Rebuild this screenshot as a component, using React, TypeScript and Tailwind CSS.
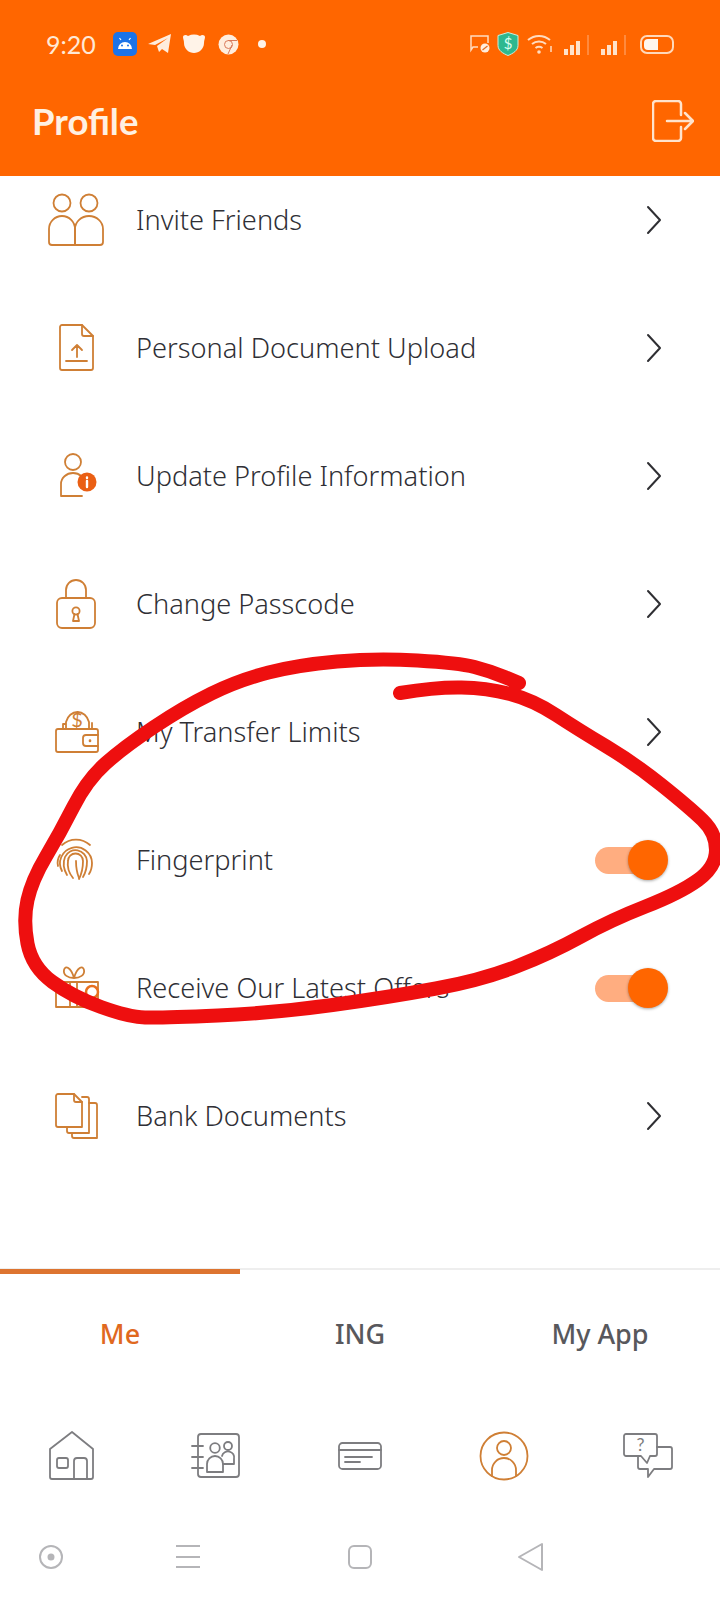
import React from 'react';

const ICON = '#cf7f35';
const GREY = '#7d7d80';

// 60x60 line icon, drawn on the same grid everywhere
const Line: React.FC<{ color?: string; width?: number; children: React.ReactNode }> = ({ color = ICON, width = 1.8, children }) => (
  <svg width="60" height="60" viewBox="0 0 60 60" fill="none" stroke={color} strokeWidth={width} strokeLinecap="round" strokeLinejoin="round">
    {children}
  </svg>
);

const InviteIcon = () => (
  <Line>
    <circle cx="16" cy="13" r="8.5" />
    <circle cx="43" cy="13" r="8.5" />
    <path d="M6 55h23V39a13 13 0 0 0-26 0v13a3 3 0 0 0 3 3z" />
    <path d="M29 55h25a3 3 0 0 0 3-3V39a14 13 0 0 0-28 0z" />
  </Line>
);

const UploadIcon = () => (
  <Line>
    <path d="M16 7h20l11 11v32a2 2 0 0 1-2 2H16a2 2 0 0 1-2-2V9a2 2 0 0 1 2-2z" />
    <path d="M36 7v9a2 2 0 0 0 2 2h9" />
    <path d="M31 39V27M26 32l5-5 5 5M20 43h21" />
  </Line>
);

const ProfileInfoIcon = () => (
  <Line>
    <circle cx="27" cy="16" r="8" />
    <path d="M15 50V38a12 11 0 0 1 24 0M15 50h21" />
    <circle cx="41" cy="36" r="9.5" fill="#ea5f14" stroke="none" />
    <path d="M41 35v6M41 31.5v.5" stroke="#fff" strokeWidth="2.4" />
  </Line>
);

const LockIcon = () => (
  <Line>
    <rect x="11" y="24" width="38" height="30" rx="5" />
    <path d="M20 24v-8a10 10 0 0 1 20 0v8" />
    <circle cx="30" cy="37" r="3.6" />
    <path d="M28.5 40L27 47h6l-1.500-7" />
  </Line>
);

const WalletIcon = () => (
  <Line>
    <path d="M10 34v14a2 2 0 0 0 2 2h38a2 2 0 0 0 2-2V29a2 2 0 0 0-2-2H12a2 2 0 0 0-2 2v5" />
    <path d="M52 33H40a3 3 0 0 0-3 3v5a3 3 0 0 0 3 3h12" />
    <path d="M44 38.500v.5" strokeWidth="2.600" />
    <path d="M17 27v-5h2M46 27v-6M20 26v-6a12 14 0 0 1 23 0v6" />
    <text x="31" y="25" textAnchor="middle" fontSize="20" fontFamily="Lato, sans-serif" fill={ICON} stroke="none">$</text>
  </Line>
);

const FingerprintIcon = () => (
  <Line>
    <path d="M16 15a21 21 0 0 1 28 0" />
    <path d="M12 36c-1-4 0-8 2-11" />
    <path d="M16 41A16 16 0 1 1 46 33c0 5-1 8-3 11" />
    <path d="M21 45C17 38 17 32 19 27a11.500 11.500 0 0 1 22 4c0 6-1 11-4 16" />
    <path d="M27 48c-4-5-6-11-5-17a7.500 7.500 0 0 1 15 0c0 6-1 12-4 18" />
    <path d="M30 31c0 6 1 12 3 17" />
  </Line>
);

const GiftIcon = () => (
  <Line>
    <path d="M10 24h42v25H10zM24 24v25M31 24v25" />
    <path d="M28 20c-6 0-11-3-10-8s7-3 10 8zM28 20c6 0 11-3 10-8s-7-3-10 8z" />
    <circle cx="46" cy="34" r="6" stroke="#e8701f" strokeWidth="2.500" />
  </Line>
);

const DocsIcon = () => (
  <Line>
    <path d="M12 8h16l8 8v25H12a2 2 0 0 1-2-2V10a2 2 0 0 1 2-2z" />
    <path d="M28 8v6a2 2 0 0 0 2 2h6" />
    <path d="M36 11h5a2 2 0 0 1 2 2v34H23a2 2 0 0 1-2-2v-4" />
    <path d="M43 17h6a2 2 0 0 1 2 2v33H28a2 2 0 0 1-2-2v-3" />
  </Line>
);

const HomeIcon = () => (
  <Line color={GREY}>
    <path d="M30 6L8 23v28a2 2 0 0 0 2 2h39a2 2 0 0 0 2-2V23z" />
    <rect x="15" y="32" width="11" height="10" rx="2" />
    <path d="M32 53V35a3 3 0 0 1 3-3h7a3 3 0 0 1 3 3v18" />
  </Line>
);

const ContactsIcon = () => (
  <Line color={GREY}>
    <rect x="12" y="8" width="41" height="43" rx="3" />
    <path d="M6 20h11M6 31h11M6 42h11" />
    <circle cx="29" cy="22" r="4.800" />
    <circle cx="42" cy="20" r="4" />
    <path d="M21 46V38a8 8 0 0 1 16 0v8z" />
    <path d="M36 30a5.500 5.500 0 0 1 12 3v5H37" />
  </Line>
);

const CardIcon = () => (
  <Line color={GREY}>
    <rect x="9" y="17" width="42" height="26" rx="3.500" />
    <path d="M9 24h42M15 31h27M15 36h15" />
  </Line>
);

const ProfileTabIcon = () => (
  <Line>
    <circle cx="30" cy="30" r="23.500" />
    <circle cx="30" cy="22" r="7" />
    <path d="M18 50V44a12 12 0 0 1 24 0v6" />
  </Line>
);

const HelpIcon = () => (
  <Line color={GREY}>
    <path d="M8 8h29a2 2 0 0 1 2 2v18a2 2 0 0 1-2 2h-5l-3 7-6-7H8a2 2 0 0 1-2-2V10a2 2 0 0 1 2-2z" />
    <path d="M39 21h13a2 2 0 0 1 2 2v18a2 2 0 0 1-2 2H36l-6 8v-8h-8a2 2 0 0 1-2-2v-11" />
    <text x="22.500" y="25" textAnchor="middle" fontSize="18" fontFamily="Lato, sans-serif" fill={GREY} stroke="none">?</text>
  </Line>
);

const Chevron = () => (
  <svg width="16" height="30" viewBox="0 0 16 30" fill="none" stroke="#2f2f33" strokeWidth="2" strokeLinecap="round" strokeLinejoin="round">
    <path d="M2 2l12 13L2 28" />
  </svg>
);

const Toggle = () => (
  <div className="relative w-[73px] h-[40px] flex items-center">
    <div className="w-[56px] h-[27px] rounded-full bg-[#ffad80]" />
    <div className="absolute right-0 top-0 w-[40px] h-[40px] rounded-full bg-[#ff6600] shadow-[0_1px_3px_rgba(0,0,0,0.35)]" />
  </div>
);

const rows = [
  { label: 'Invite Friends', icon: <InviteIcon /> },
  { label: 'Personal Document Upload', icon: <UploadIcon /> },
  { label: 'Update Profile Information', icon: <ProfileInfoIcon /> },
  { label: 'Change Passcode', icon: <LockIcon /> },
  { label: 'My Transfer Limits', icon: <WalletIcon /> },
  { label: 'Fingerprint', icon: <FingerprintIcon />, toggle: true },
  { label: 'Receive Our Latest Offers', icon: <GiftIcon />, toggle: true },
  { label: 'Bank Documents', icon: <DocsIcon /> },
];

const StatusLeft = () => (
  <div className="flex items-center">
    <span className="text-[25px] leading-none text-[#ffe9d6] font-['Lato',sans-serif] w-[67px]">9:20</span>
    <svg width="24" height="24" viewBox="0 0 24 24">
      <rect width="24" height="24" rx="5" fill="#1b73e8" />
      <path d="M5 17a7 7 0 0 1 14 0z" fill="#fff" />
      <path d="M8 8L6.500 6M16 8l1.500-2" stroke="#fff" strokeWidth="1.200" />
      <circle cx="9" cy="13.500" r="1" fill="#1b73e8" />
      <circle cx="15" cy="13.500" r="1" fill="#1b73e8" />
    </svg>
    <svg className="ml-[11px]" width="24" height="22" viewBox="0 0 24 22">
      <path d="M0 11L23 1l-3 19-6-4-3 3-2-6 11-8-13 7z" fill="#ffeddd" />
    </svg>
    <svg className="ml-[10px]" width="24" height="20" viewBox="0 0 24 20">
      <path d="M1 3c0-2 3-3 5-1a14 14 0 0 1 12 0c2-2 5-1 5 1 0 2-1 3-1 6 0 6-5 10-10 10S2 15 2 9c0-3-1-4-1-6z" fill="#fff3e8" />
    </svg>
    <svg className="ml-[12px]" width="21" height="21" viewBox="0 0 21 21" fill="none">
      <circle cx="10.500" cy="10.500" r="10" fill="#ffeddd" />
      <circle cx="10.500" cy="10.500" r="4" stroke="#d9795a" strokeWidth="1" />
      <path d="M10 6.500h9M14 11l-4 9" stroke="#d9795a" strokeWidth="1" />
    </svg>
    <div className="ml-[19px] w-[8px] h-[8px] rounded-full bg-[#fff3e8]" />
  </div>
);

const StatusRight = () => (
  <div className="flex items-center">
    <svg width="20" height="20" viewBox="0 0 20 20" fill="none">
      <path d="M8 13H3l-2 3V2h17v7" stroke="#ffdcc0" strokeWidth="1.500" />
      <circle cx="15" cy="14" r="4.500" fill="#ffeddd" />
      <path d="M12.500 16l5-4" stroke="#e06a20" strokeWidth="1.200" />
    </svg>
    <svg className="ml-[7px]" width="22" height="24" viewBox="0 0 22 24">
      <path d="M11 0.500l10 3v10c0 5-5 8-10 10-5-2-10-5-10-10v-10z" fill="#2fb88f" stroke="#c8f0dc" strokeWidth="1" />
      <text x="11" y="17" textAnchor="middle" fontSize="15" fontFamily="Lato, sans-serif" fill="#d8fff0">$</text>
    </svg>
    <svg className="ml-[8px]" width="27" height="22" viewBox="0 0 27 22" fill="none" stroke="#ffdcc0" strokeWidth="2">
      <path d="M1 7a17 17 0 0 1 22 0M5 11a11 11 0 0 1 14 0M8.500 15a6 6 0 0 1 7 0" />
      <circle cx="12" cy="19" r="1.800" fill="#ffdcc0" stroke="none" />
      <path d="M24 13v6" strokeWidth="1.500" />
    </svg>
    {[0, 1].map(i => (
      <div key={i} className="flex items-end gap-[2px] h-[22px] ml-[10px] w-[27px]">
        <div className="w-[4px] h-[6px] bg-[#ffe2ca]" />
        <div className="w-[4px] h-[10px] bg-[#ffe2ca]" />
        <div className="w-[4px] h-[14px] bg-[#ffe2ca]" />
        <div className="w-[2px] h-[20px] bg-[#ff8a3e] ml-[5px]" />
      </div>
    ))}
    <div className="ml-[12px] w-[34px] h-[19px] rounded-[7px] border-2 border-[#ffd9bb] p-[2px] flex">
      <div className="w-[14px] h-full rounded-l-[4px] bg-[#fff6ee]" />
    </div>
  </div>
);

// hand drawn marker ring, traced from the picture
const ring: [number, number][] = [
  [519, 683], [490, 671], [459, 663], [376, 658], [298, 665], [239, 680], [184, 707], [124, 747], [87, 780], [60, 833],
  [32, 880], [23, 920], [32, 967], [73, 997], [129, 1017], [161, 1018], [275, 1013], [390, 997], [482, 980],
  [551, 953], [611, 920], [680, 893], [716, 867], [716, 833], [689, 807], [634, 763], [579, 730], [533, 700],
  [487, 688], [436, 687], [400, 693],
];

const ringPath = ring.reduce((d, p, i) => {
  if (i === 0) return `M${p[0]} ${p[1]}`;
  const prev = ring[i - 1];
  const mx = (prev[0] + p[0]) / 2;
  const my = (prev[1] + p[1]) / 2;
  return i === ring.length - 1 ? `${d} Q${prev[0]} ${prev[1]} ${p[0]} ${p[1]}` : `${d} Q${prev[0]} ${prev[1]} ${mx} ${my}`;
}, '');

export default function App() {
  return (
    <div className="relative flex flex-col h-[1600px] w-[720px] overflow-hidden bg-white font-['Noto_Sans',sans-serif]">
      <header className="relative z-10 h-[176px] bg-[#ff6600] shrink-0">
        <div className="h-[88px] pl-[46px] pr-[46px] flex items-center justify-between">
          <StatusLeft />
          <StatusRight />
        </div>
        <div className="h-[66px] pl-[32px] pr-[26px] flex items-center justify-between">
          <h1 className="text-[36.500px] font-bold text-[#fff0e2] font-['Lato',sans-serif]">Profile</h1>
          <svg width="42" height="42" viewBox="0 0 42 42" fill="none" stroke="#ffe3cc" strokeWidth="2.500" strokeLinecap="round" strokeLinejoin="round">
            <path d="M29 15V4a3 3 0 0 0-3-3H4a3 3 0 0 0-3 3v34a3 3 0 0 0 3 3h22a3 3 0 0 0 3-3V27" />
            <path d="M15 21h25M33 13l8 8-8 8" />
          </svg>
        </div>
      </header>

      <main className="flex-1 overflow-hidden">
        <div className="-mt-[20px]">
          {rows.map(row => (
            <div key={row.label} className="h-[128px] flex items-center pl-[46px]">
              <div className="w-[60px] h-[60px] shrink-0">{row.icon}</div>
              <span className="ml-[30px] flex-1 text-[27.200px] font-light text-[#2f2f35]">{row.label}</span>
              {row.toggle ? (
                <div className="mr-[52px]"><Toggle /></div>
              ) : (
                <div className="mr-[58px] flex"><Chevron /></div>
              )}
            </div>
          ))}
        </div>
      </main>

      <div className="relative h-[130px] shrink-0 border-t-2 border-[#eeeeee] grid grid-cols-3 items-center text-[27px] font-medium text-[#58585c] text-center">
        <div className="absolute -top-[1px] left-0 w-[240px] h-[5px] bg-[#dd7430]" />
        <span className="text-[#e0691f]">Me</span>
        <span>ING</span>
        <span>My App</span>
      </div>

      <div className="h-[116px] shrink-0 grid grid-cols-5 items-center justify-items-center">
        <HomeIcon />
        <ContactsIcon />
        <CardIcon />
        <ProfileTabIcon />
        <HelpIcon />
      </div>

      <div className="h-[86px] shrink-0 flex items-center pl-[34px]">
        <svg width="34" height="34" viewBox="0 0 34 34" fill="none" stroke="#b5b5b8" strokeWidth="2">
          <circle cx="17" cy="17" r="11" />
          <circle cx="17" cy="17" r="2.500" fill="#b5b5b8" />
        </svg>
        <svg className="ml-[103px]" width="34" height="34" viewBox="0 0 34 34" fill="none" stroke="#b5b5b8" strokeWidth="2">
          <path d="M5 6h24M5 17h24M5 27h24" />
        </svg>
        <svg className="ml-[138px]" width="34" height="34" viewBox="0 0 34 34" fill="none" stroke="#b5b5b8" strokeWidth="2">
          <rect x="6" y="6" width="22" height="22" rx="5" />
        </svg>
        <svg className="ml-[137px]" width="34" height="34" viewBox="0 0 34 34" fill="none" stroke="#b5b5b8" strokeWidth="2" strokeLinejoin="round">
          <path d="M5 17L28 4v26z" />
        </svg>
      </div>

      <svg className="absolute inset-0 z-20 pointer-events-none" width="720" height="1600" viewBox="0 0 720 1600" fill="none">
        <path d={ringPath} stroke="#ee0f0f" strokeWidth="14" strokeLinecap="round" strokeLinejoin="round" />
      </svg>
    </div>
  );
}
